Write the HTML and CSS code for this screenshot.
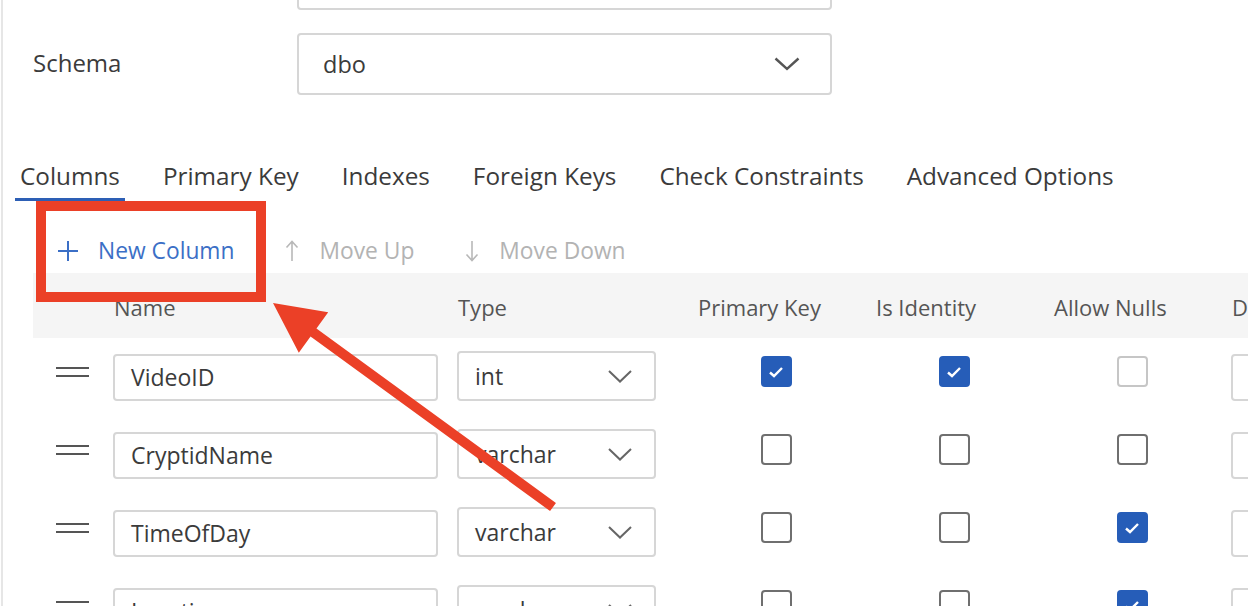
FILE: index.html
```html
<!DOCTYPE html>
<html>
<head>
<meta charset="utf-8">
<link rel="stylesheet" href="styles.css">
</head>
<body>
<div class="page">
  <div class="form-row form-row-first">
    <div class="form-label"></div>
    <div class="form-box"></div>
  </div>
  <div class="form-row">
    <div class="form-label">Schema</div>
    <div class="form-box">
      <span class="form-value">dbo</span>
      <svg class="chev-lg" width="26" height="14" viewBox="0 0 26 14"><path d="M1.5 1.5 L13 12 L24.5 1.5" fill="none" stroke="#555" stroke-width="2.4"/></svg>
    </div>
  </div>

  <div class="tabs">
    <div class="tab active">Columns</div>
    <div class="tab">Primary Key</div>
    <div class="tab">Indexes</div>
    <div class="tab">Foreign Keys</div>
    <div class="tab">Check Constraints</div>
    <div class="tab">Advanced Options</div>
  </div>

  <div class="toolbar">
    <div class="tool tool-primary">
      <svg class="tool-icon" width="20" height="20" viewBox="0 0 20 20"><path d="M10 0 V20 M0 10 H20" stroke="#3b6fc6" stroke-width="2"/></svg>
      <span>New Column</span>
    </div>
    <div class="tool tool-disabled">
      <svg class="tool-icon" width="20" height="22" viewBox="0 0 20 22"><path d="M10 21 V2 M4.5 7.5 L10 1.5 L15.5 7.5" fill="none" stroke="#b8b8b8" stroke-width="1.6"/></svg>
      <span>Move Up</span>
    </div>
    <div class="tool tool-disabled">
      <svg class="tool-icon" width="20" height="22" viewBox="0 0 20 22"><path d="M10 1 V20 M4.5 14.5 L10 20.5 L15.5 14.5" fill="none" stroke="#b8b8b8" stroke-width="1.6"/></svg>
      <span>Move Down</span>
    </div>
  </div>

  <div class="grid thead">
    <div class="th"></div>
    <div class="th">Name</div>
    <div class="th">Type</div>
    <div class="th">Primary Key</div>
    <div class="th">Is Identity</div>
    <div class="th">Allow Nulls</div>
    <div class="th">Default Value</div>
  </div>

  <div class="grid row">
    <div class="cell"><div class="handle"></div></div>
    <div class="cell"><div class="text-input">VideoID</div></div>
    <div class="cell"><div class="select"><span>int</span><svg width="24" height="13" viewBox="0 0 24 13"><path d="M1 1 L12 11.5 L23 1" fill="none" stroke="#666" stroke-width="2"/></svg></div></div>
    <div class="cell cell-check"><div class="cb checked"><svg width="16" height="12" viewBox="0 0 16 12"><path d="M2 6.5 L6 10 L14 2" fill="none" stroke="#fff" stroke-width="2.4"/></svg></div></div>
    <div class="cell cell-check"><div class="cb checked"><svg width="16" height="12" viewBox="0 0 16 12"><path d="M2 6.5 L6 10 L14 2" fill="none" stroke="#fff" stroke-width="2.4"/></svg></div></div>
    <div class="cell cell-check"><div class="cb disabled"></div></div>
    <div class="cell"><div class="text-input wide"></div></div>
  </div>

  <div class="grid row">
    <div class="cell"><div class="handle"></div></div>
    <div class="cell"><div class="text-input">CryptidName</div></div>
    <div class="cell"><div class="select"><span>varchar</span><svg width="24" height="13" viewBox="0 0 24 13"><path d="M1 1 L12 11.5 L23 1" fill="none" stroke="#666" stroke-width="2"/></svg></div></div>
    <div class="cell cell-check"><div class="cb"></div></div>
    <div class="cell cell-check"><div class="cb"></div></div>
    <div class="cell cell-check"><div class="cb"></div></div>
    <div class="cell"><div class="text-input wide"></div></div>
  </div>

  <div class="grid row">
    <div class="cell"><div class="handle"></div></div>
    <div class="cell"><div class="text-input">TimeOfDay</div></div>
    <div class="cell"><div class="select"><span>varchar</span><svg width="24" height="13" viewBox="0 0 24 13"><path d="M1 1 L12 11.5 L23 1" fill="none" stroke="#666" stroke-width="2"/></svg></div></div>
    <div class="cell cell-check"><div class="cb"></div></div>
    <div class="cell cell-check"><div class="cb"></div></div>
    <div class="cell cell-check"><div class="cb checked"><svg width="16" height="12" viewBox="0 0 16 12"><path d="M2 6.5 L6 10 L14 2" fill="none" stroke="#fff" stroke-width="2.4"/></svg></div></div>
    <div class="cell"><div class="text-input wide"></div></div>
  </div>

  <div class="grid row">
    <div class="cell"><div class="handle"></div></div>
    <div class="cell"><div class="text-input">Location</div></div>
    <div class="cell"><div class="select"><span>varchar</span><svg width="24" height="13" viewBox="0 0 24 13"><path d="M1 1 L12 11.5 L23 1" fill="none" stroke="#666" stroke-width="2"/></svg></div></div>
    <div class="cell cell-check"><div class="cb"></div></div>
    <div class="cell cell-check"><div class="cb"></div></div>
    <div class="cell cell-check"><div class="cb checked"><svg width="16" height="12" viewBox="0 0 16 12"><path d="M2 6.5 L6 10 L14 2" fill="none" stroke="#fff" stroke-width="2.4"/></svg></div></div>
    <div class="cell"><div class="text-input wide"></div></div>
  </div>
</div>

<div class="highlight-box"></div>
<svg class="annotation" width="1248" height="606" viewBox="0 0 1248 606">
  <polygon fill="#eb4027" points="273,303 328.2,312.3 316.45,328.46 555.95,502.96 550.05,511.04 310.55,336.54 298.8,352.7"/>
</svg>
</body>
</html>
```

FILE: styles.css
```css
* { box-sizing: border-box; }
html, body {
  margin: 0;
  padding: 0;
  width: 1248px;
  height: 606px;
  overflow: hidden;
  background: #fff;
  font-family: "Open Sans", "Noto Sans", sans-serif;
  color: #3b3b3b;
}
.page {
  position: relative;
  margin-left: 1px;
  border-left: 2px solid #e6e6e6;
  height: 606px;
  overflow: hidden;
}

/* form */
.form-row {
  display: flex;
  align-items: center;
  margin-top: 23px;
}
.form-row-first { margin-top: -52px; }
.form-label {
  width: 294px;
  padding-left: 30px;
  padding-bottom: 3px;
  font-size: 24px;
  color: #3b3b3b;
}
.form-box {
  width: 535px;
  height: 62px;
  border: 2px solid #d6d6d6;
  border-radius: 4px;
  display: flex;
  align-items: center;
  justify-content: space-between;
  padding: 0 30px 0 24px;
}
.form-value { font-size: 23.5px; }

/* tabs */
.tabs {
  display: flex;
  margin-top: 55px;
  padding-left: 12px;
  gap: 33px;
}
.tab {
  padding: 11px 5px 7px;
  line-height: 30px;
  font-size: 24.3px;
  color: #3b3b3b;
  border-bottom: 3px solid transparent;
}
.tab.active { border-bottom-color: #2d5fb5; }

/* toolbar */
.toolbar {
  display: flex;
  align-items: center;
  height: 72px;
  padding: 27px 0 0 55px;
  gap: 48px;
}
.tool {
  display: flex;
  align-items: center;
  gap: 20px;
  font-size: 22.8px;
  line-height: 30px;
}
.tool-icon { display: block; }
.tool-primary { color: #3b6fc6; }
.tool-disabled { color: #b3b3b3; gap: 17px; }

/* grid */
.grid {
  display: grid;
  grid-template-columns: 60px 344px 240px 178px 178px 178px 1fr;
  margin-left: 30px;
}
.thead {
  background: #f5f5f5;
  height: 65px;
  align-items: center;
  padding-top: 3px;
}
.th {
  padding-left: 21px;
  font-size: 22px;
  color: #555;
  white-space: nowrap;
  overflow: hidden;
}
.row {
  height: 78px;
}
.cell {
  padding-left: 20px;
  position: relative;
}
.handle {
  position: relative;
  margin: 29px 0 0 3px;
  width: 33px;
  height: 10px;
  border-top: 2.5px solid #555;
  border-bottom: 2.5px solid #555;
}
.text-input {
  margin-top: 16px;
  width: 325px;
  height: 47px;
  border: 2px solid #d6d6d6;
  border-radius: 4px;
  padding-left: 16px;
  font-size: 23px;
  line-height: 43px;
  color: #3b3b3b;
}
.text-input.wide { width: 200px; }
.select {
  margin-top: 13px;
  width: 199px;
  height: 50px;
  border: 2px solid #d6d6d6;
  border-radius: 4px;
  padding: 0 22px 0 16px;
  display: flex;
  align-items: center;
  justify-content: space-between;
  font-size: 23px;
  color: #3b3b3b;
}
.cell-check {
  display: flex;
  justify-content: center;
}
.cb {
  margin-top: 18px;
  width: 31px;
  height: 31px;
  border: 2px solid #6f6f6f;
  border-radius: 4px;
  display: flex;
  align-items: center;
  justify-content: center;
}
.cb.checked {
  background: #265db8;
  border-color: #265db8;
}
.cb.disabled { border-color: #c6c6c6; }

/* annotations */
.highlight-box {
  position: absolute;
  left: 36px;
  top: 201px;
  width: 230px;
  height: 101px;
  border: 10px solid #eb4027;
}
.annotation {
  position: absolute;
  left: 0;
  top: 0;
  pointer-events: none;
}
```
